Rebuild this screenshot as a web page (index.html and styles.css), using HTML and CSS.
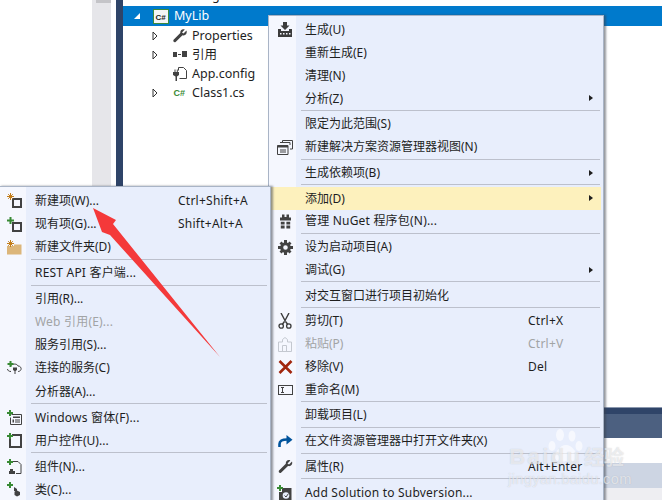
FILE: index.html
```html
<!DOCTYPE html>
<html lang="zh-CN">
<head>
<meta charset="utf-8">
<title>MyLib</title>
<link rel="stylesheet" href="styles.css">
</head>
<body>
<div class="ide">
  <div class="blank"></div>
  <div class="scrollbar"><div class="thumb"></div></div>
  <div class="gap"></div>
  <div class="navy"></div>
  <div class="tree">
    <div class="tree-clip"><div class="tree-row cut"><span class="tree-label indent">Programics</span></div></div>
    <div class="tree-row selected">
      <svg class="exp" width="8" height="8" viewBox="0 0 8 8"><path d="M7 1V7H1Z" fill="#fff"/></svg>
      <svg class="proj" width="16" height="15" viewBox="0 0 16 15"><rect x=".5" y=".5" width="15" height="14" fill="#f5f5f5" stroke="#3c8a3c"/><text x="2.6" y="10.6" class="cs">C#</text></svg>
      <span class="tree-label">MyLib</span>
    </div>
    <div class="tree-row child">
      <svg class="tw" width="6" height="10" viewBox="0 0 6 10"><path d="M1 1L5 5L1 9Z" fill="#fff" stroke="#333"/></svg>
      <svg class="ti" width="16" height="16" viewBox="0 0 16 16"><path d="M14.5 2.5L11.5 5.5L10 4.5L12.8 1.6C10.4.6 8 2 8.3 5L1.6 11.8C.6 13 2.3 15.200 3.600 14L10.500 7.300C13.200 8.200 15.500 5.500 14.500 2.500Z" fill="#424242"/></svg>
      <span class="tree-label">Properties</span>
    </div>
    <div class="tree-row child">
      <svg class="tw" width="6" height="10" viewBox="0 0 6 10"><path d="M1 1L5 5L1 9Z" fill="#fff" stroke="#333"/></svg>
      <svg class="ti" width="16" height="16" viewBox="0 0 16 16"><path d="M1 5h4v5H1zM10 4h5v6h-5zM6 7h3v1H6z" fill="#424242"/></svg>
      <span class="tree-label">引用</span>
    </div>
    <div class="tree-row child">
      <span class="tw"></span>
      <svg class="ti" width="16" height="16" viewBox="0 0 16 16"><path d="M6.500 4.500V1.500H11.500L14.500 4.500V12.500H7.500" fill="none" stroke="#424242"/><path d="M1 6h6v3L5 10.500V15H3.500V10.500L1 9ZM2.500 3.500h1V6h-1zM4.800 3.500h1V6h-1z" fill="#424242"/></svg>
      <span class="tree-label">App.config</span>
    </div>
    <div class="tree-row child">
      <svg class="tw" width="6" height="10" viewBox="0 0 6 10"><path d="M1 1L5 5L1 9Z" fill="#fff" stroke="#333"/></svg>
      <svg class="ti" width="16" height="16" viewBox="0 0 16 16"><text x="1.500" y="11" class="csg">C#</text></svg>
      <span class="tree-label">Class1.cs</span>
    </div>
  </div>
</div>

<div class="bottom-panel">
  <div class="bp-navy"></div>
  <div class="bp-slate"></div>
  <div class="bp-white"></div>
  <div class="bp-blue"></div>
  <div class="bp-gray"></div>
</div>

<div class="menu main-menu">
  <div class="item"><span class="ic"><svg width="16" height="16" viewBox="0 0 16 16"><path d="M6 0h4v3.500h2.500L8 8 3.500 3.500H6z" fill="#3c3c3c"/><path d="M1 7h3v2h8V7h3v8H1z" fill="#3c3c3c"/><path d="M3 11h1.500v1.500H3zM6 11h1.500v1.500H6zM9 11h1.500v1.500H9zM12 11h1.500v1.500H12z" fill="#f5f7fe"/></svg></span><span class="lbl">生成(U)</span></div>
  <div class="item"><span class="ic"></span><span class="lbl">重新生成(E)</span></div>
  <div class="item"><span class="ic"></span><span class="lbl">清理(N)</span></div>
  <div class="item"><span class="ic"></span><span class="lbl">分析(Z)</span><span class="arrow"></span></div>
  <div class="sep"></div>
  <div class="item"><span class="ic"></span><span class="lbl">限定为此范围(S)</span></div>
  <div class="item"><span class="ic"><svg width="16" height="15" viewBox="0 0 16 15"><path d="M5.500 2.500V.5H15.500V9H13M3 2.500H13V5M.5 5.500H11V14.500H.5Z" fill="none" stroke="#424242"/><path d="M.5 5.500H11V7.500H.5zM3 9.500H9V10.500H3zM3 11.500H9V12.500H3z" fill="#424242"/></svg></span><span class="lbl">新建解决方案资源管理器视图(N)</span></div>
  <div class="sep"></div>
  <div class="item"><span class="ic"></span><span class="lbl">生成依赖项(B)</span><span class="arrow"></span></div>
  <div class="sep"></div>
  <div class="item active"><span class="ic"></span><span class="lbl">添加(D)</span><span class="arrow"></span></div>
  <div class="item"><span class="ic"><svg width="11" height="15" viewBox="0 0 11 15"><path d="M2 .5h2.500V3h2V.5H9V3.500H11V6.500H0V3.500H2ZM.8 7.800H4.600V10.500H.8zM6.400 7.800H10.200V10.500H6.400zM.8 11.500H4.600V14.500H.8zM6.400 11.500H10.200V14.500H6.400z" fill="#424242"/></svg></span><span class="lbl"><span class="la">管理 NuGet 程序包(N)...</span></span></div>
  <div class="sep"></div>
  <div class="item"><span class="ic"><svg width="15" height="15" viewBox="0 0 15 15"><circle cx="7.500" cy="7.500" r="3.800" fill="none" stroke="#424242" stroke-width="3"/><path d="M6 0h3v3H6zM6 12h3v3H6zM0 6h3v3H0zM12 6h3v3h-3zM1.500 3.500l2-2 2 2-2 2zM9.500 3.500l2-2 2 2-2 2zM1.500 11.500l2-2 2 2-2 2zM9.500 11.500l2-2 2 2-2 2z" fill="#424242"/></svg></span><span class="lbl">设为启动项目(A)</span></div>
  <div class="item"><span class="ic"></span><span class="lbl">调试(G)</span><span class="arrow"></span></div>
  <div class="sep"></div>
  <div class="item"><span class="ic"></span><span class="lbl">对交互窗口进行项目初始化</span></div>
  <div class="sep"></div>
  <div class="item"><span class="ic"><svg width="14" height="16" viewBox="0 0 14 16"><path d="M3 0L7.500 8.500M11 0L6.500 8.500" stroke="#3c3c3c" stroke-width="1.400" fill="none"/><path d="M7.500 8.500L9.800 11.500M6.500 8.500L4.200 11.500" stroke="#3c3c3c" stroke-width="1.400"/><circle cx="3.200" cy="13" r="2.200" fill="none" stroke="#3c3c3c" stroke-width="1.300"/><circle cx="10.800" cy="13" r="2.200" fill="none" stroke="#3c3c3c" stroke-width="1.300"/></svg></span><span class="lbl">剪切(T)</span><span class="key">Ctrl+X</span></div>
  <div class="item dim"><span class="ic"><svg width="14" height="15" viewBox="0 0 14 15"><path d="M4.500 2.500L7 .5L9.500 2.500V5H13.500V14.500H.5V5H4.500ZM4.500 8.500H8.500V14.500H4.500Z" fill="none" stroke="#c4c8d0"/></svg></span><span class="lbl">粘贴(P)</span><span class="key">Ctrl+V</span></div>
  <div class="item"><span class="ic"><svg width="15" height="14" viewBox="0 0 15 14"><path d="M1.500 1L13.500 13M13.500 1L1.500 13" stroke="#a1260d" stroke-width="2.600"/></svg></span><span class="lbl">移除(V)</span><span class="key">Del</span></div>
  <div class="item"><span class="ic"><svg width="15" height="10" viewBox="0 0 15 10"><rect x=".5" y=".5" width="14" height="9" fill="#f5f7fe" stroke="#424242"/><path d="M3 2.500H6M3 7.500H6M4.500 2.500V7.500" stroke="#424242"/></svg></span><span class="lbl">重命名(M)</span></div>
  <div class="sep"></div>
  <div class="item"><span class="ic"></span><span class="lbl">卸载项目(L)</span></div>
  <div class="sep"></div>
  <div class="item"><span class="ic"><svg width="15" height="13" viewBox="0 0 15 13"><path d="M1.500 12V9C1.500 5.800 4 4.500 9 4.500" fill="none" stroke="#00539c" stroke-width="2.600"/><path d="M8.500 0L14.500 4.800L8.500 9.500Z" fill="#00539c"/></svg></span><span class="lbl">在文件资源管理器中打开文件夹(X)</span></div>
  <div class="sep"></div>
  <div class="item"><span class="ic"><svg width="15" height="15" viewBox="0 0 15 15"><path d="M14 2.500L11 5.500L9.500 4.500L12.300 1.400C10 .4 7.500 2 7.800 4.800L1 11.500C0 12.700 1.800 14.900 3 13.700L10 7C12.700 7.800 15 5.500 14 2.500Z" fill="#424242"/></svg></span><span class="lbl">属性(R)</span><span class="key">Alt+Enter</span></div>
  <div class="sep"></div>
  <div class="item"><span class="ic"><svg width="16" height="16" viewBox="0 0 16 16"><path d="M5 3H14.500V15.500H2V7H5Z" fill="#424242"/><circle cx="9" cy="10.500" r="3.300" fill="#e8eefc"/><path d="M7.500 10.500L9 12L11.500 8.500" stroke="#424242" fill="none"/><path d="M2 0h2v2h2v2H4v2H2V4H0V2h2z" fill="#388a34"/></svg></span><span class="lbl la">Add Solution to Subversion...</span></div>
</div>

<div class="menu sub-menu">
  <div class="item"><span class="ic"><svg width="15" height="15" viewBox="0 0 15 15"><path d="M6 6h8v8H6z" fill="none" stroke="#424242" stroke-width="2"/><path d="M3.500 0v7M0 3.500h7M1.200 1.200l4.600 4.600M5.800 1.200L1.200 5.800" stroke="#c27d1a"/></svg></span><span class="lbl">新建项(W)...</span><span class="key">Ctrl+Shift+A</span></div>
  <div class="item"><span class="ic"><svg width="15" height="15" viewBox="0 0 15 15"><path d="M6 6h8v8H6z" fill="none" stroke="#424242" stroke-width="2"/><path d="M2.500 0h2v2.500H7v2H4.500V7h-2V4.500H0v-2h2.500z" fill="#388a34"/></svg></span><span class="lbl">现有项(G)...</span><span class="key">Shift+Alt+A</span></div>
  <div class="item"><span class="ic"><svg width="15" height="15" viewBox="0 0 15 15"><path d="M0 6H7V4.500H14.500V14.500H0Z" fill="#dcb67a"/><path d="M3.500 0v7M0 3.500h7M1.200 1.200l4.600 4.600M5.800 1.200L1.200 5.800" stroke="#c27d1a"/></svg></span><span class="lbl">新建文件夹(D)</span></div>
  <div class="sep"></div>
  <div class="item"><span class="ic"></span><span class="lbl la">REST API 客户端...</span></div>
  <div class="sep"></div>
  <div class="item"><span class="ic"></span><span class="lbl">引用(R)...</span></div>
  <div class="item dim"><span class="ic"></span><span class="lbl la">Web 引用(E)...</span></div>
  <div class="item"><span class="ic"></span><span class="lbl">服务引用(S)...</span></div>
  <div class="item"><span class="ic"><svg width="15" height="14" viewBox="0 0 15 14"><path d="M4 4.500C6 2.500 10 2.500 11 5C13.500 5 14.500 7 14 8.500C13.500 10 12 10.500 11 10.500M4 10.500C2 10.500.5 9.500.5 8" fill="none" stroke="#424242"/><path d="M6 6.500h4V9L8.500 10v3h-1v-3L6 9z" fill="#424242"/><path d="M2.500 0h2v2h2v2h-2v2h-2V4h-2V2h2z" fill="#388a34"/></svg></span><span class="lbl">连接的服务(C)</span></div>
  <div class="item"><span class="ic"></span><span class="lbl">分析器(A)...</span></div>
  <div class="sep"></div>
  <div class="item"><span class="ic"><svg width="15" height="15" viewBox="0 0 15 15"><path d="M4.500 4.500H14.500V14.500H3.500V7.500" fill="none" stroke="#424242"/><path d="M6 6.500H13V8H6zM8 9.500H13V10.500H8zM8 11.500H13V12.500H8zM5.500 9.500H7V12.500H5.500z" fill="#424242"/><path d="M2 0h2v2h2v2H4v2H2V4H0V2h2z" fill="#388a34"/></svg></span><span class="lbl la">Windows 窗体(F)...</span></div>
  <div class="item"><span class="ic"><svg width="15" height="15" viewBox="0 0 15 15"><path d="M5 2H14V14H3V6" fill="none" stroke="#424242" stroke-width="2"/><path d="M2 0h2v2h2v2H4v2H2V4H0V2h2z" fill="#388a34"/></svg></span><span class="lbl">用户控件(U)...</span></div>
  <div class="sep"></div>
  <div class="item"><span class="ic"><svg width="15" height="15" viewBox="0 0 15 15"><path d="M6 2.500H11L14 5.500V14.500H9" fill="none" stroke="#424242"/><path d="M3 10h3v2h2v3H2v-3h1z" fill="#424242"/><path d="M2 0h2v2h2v2H4v2H2V4H0V2h2z" fill="#388a34"/></svg></span><span class="lbl">组件(N)...</span></div>
  <div class="item"><span class="ic"><svg width="15" height="15" viewBox="0 0 15 15"><path d="M7 5l3 2v3l-3-1zM10 8.500l3 1.500v3l-3 1.500-2.500-1.500V10z" fill="#424242"/><path d="M2 0h2v2h2v2H4v2H2V4H0V2h2z" fill="#388a34"/></svg></span><span class="lbl">类(C)...</span></div>
</div>

<svg class="red-arrow" width="662" height="500" viewBox="0 0 662 500"><path d="M93 208L116 220L113 224L220 357L110 235L102 232Z" fill="#f4393a"/></svg>

<div class="watermark">
  <svg class="paw" width="38" height="36" viewBox="0 0 38 36"><g fill="#fff" fill-opacity=".6"><ellipse cx="5" cy="18" rx="3.500" ry="5"/><ellipse cx="13" cy="7" rx="4" ry="6"/><ellipse cx="25" cy="8" rx="3.500" ry="5.500"/><ellipse cx="32" cy="18" rx="3.500" ry="5"/><path d="M19 17C25 17 31 25 30 30C28 35 23 34 19 33C15 34 10 35 8 30C7 25 13 17 19 17Z"/></g></svg>
  <span class="wm-line1">Baidu</span>
  <span class="wm-cn">经验</span>
  <span class="wm-line2">jingyan.baidu.com</span>
</div>
</body>
</html>
```
FILE: styles.css
```css
* { box-sizing: border-box; }
html, body { margin: 0; padding: 0; }
body {
  width: 662px;
  height: 500px;
  overflow: hidden;
  position: relative;
  background: #fff;
  font-family: "Noto Sans", "Noto Sans CJK SC", sans-serif;
  font-size: 12px;
  color: #1e1e1e;
}
.ide { display: flex; height: 500px; }
.blank { width: 92px; }
.scrollbar { width: 19px; background: #e6e6ea; padding: 0 0 0 4px; }
.thumb { width: 15px; height: 3px; background: #c4c4c8; }
.gap { width: 5px; background: #fff; }
.navy { width: 7px; background: #2f4468; }
.tree { flex: 1; min-width: 0; }
.tree-clip { height: 6px; overflow: hidden; position: relative; }
.tree-row { height: 19px; display: flex; align-items: center; padding-left: 29px; }
.cut { margin-top: -14px; }
.indent { padding-left: 40px; }
.tree-row.selected { height: 20px; background: #007acc; color: #fff; padding-left: 10px; }
.exp { margin-right: 12px; }
.proj { margin-right: 5px; }
.cs { font-family: "Liberation Sans", sans-serif; font-size: 8px; font-weight: 700; fill: #1e1e1e; }
.csg { font-family: "Liberation Sans", sans-serif; font-size: 9px; font-weight: 700; fill: #388a34; }
.tree-label { font-size: 12.500px; line-height: 18px; white-space: nowrap; }
.child .tw { width: 6px; margin-right: 14px; flex: none; }
.child .ti { margin-right: 4px; flex: none; }

.bottom-panel { position: absolute; left: 604px; top: 407px; width: 58px; height: 93px; display: flex; flex-direction: column; }
.bp-navy { height: 7px; background: #2f4468; border-top: 1px solid #8b98ae; }
.bp-slate { height: 24px; background: #4c6080; }
.bp-white { height: 25px; background: #fff; }
.bp-blue { height: 25px; background: #cdd5e3; }
.bp-gray { flex: 1; background: #eeeef2; }

.menu {
  position: absolute;
  background: linear-gradient(to right, #f5f7fe 0, #f5f7fe var(--ic), #e8eefc var(--ic));
  border: 1px solid #a9b4c6;
  box-shadow: 2px 0 2px rgba(60, 65, 75, .55);
}
.main-menu { --ic: 27px; left: 268px; top: 15px; width: 336px; height: 490px; padding: 3px 0 0 0; }
.sub-menu { --ic: 26px; left: -1px; top: 186px; width: 272px; height: 320px; padding: 2.400px 0 0 0; }
.item { height: 22.75px; display: flex; align-items: center; white-space: nowrap; position: relative; }
.sub-menu .item { height: 23.08px; }
.ic { display: flex; align-items: center; justify-content: center; flex: none; }
.main-menu .ic { width: 32px; margin-right: 4px; }
.sub-menu .ic { width: 28px; margin-right: 7px; }
.lbl { line-height: 18px; }
.la { letter-spacing: .2px; }
.key { position: absolute; line-height: 18px; letter-spacing: .25px; }
.main-menu .key { left: 259px; }
.sub-menu .key { left: 178px; }
.dim { color: #a2a4a5; }
.active { background: #fdf1bd; width: 332px; }
.sep { height: 3px; margin: 0 0 0 32px; border-bottom: 1px solid #bcc0cc; padding: 0; width: 299px; position: relative; top: -2px; }
.sub-menu .sep { margin-left: 31px; width: 236px; }
.arrow { position: absolute; right: 10px; top: 8px; width: 0; height: 0; border-left: 4px solid #1e1e1e; border-top: 3.500px solid transparent; border-bottom: 3.500px solid transparent; }
.active .arrow { right: 8px; }

.red-arrow { position: absolute; left: 0; top: 0; pointer-events: none; }

.watermark { position: absolute; left: 505px; top: 428px; width: 150px; height: 70px; color: rgba(255,255,255,.6); font-family: "Liberation Sans", sans-serif; text-shadow: 0 0 1px rgba(110,115,130,.35); }
.paw { position: absolute; left: 42px; top: 0; }
.wm-line1 { position: absolute; left: 4px; top: 16px; font-size: 22px; line-height: 26px; font-weight: 700; letter-spacing: 2.400px; white-space: nowrap; }
.wm-cn { position: absolute; left: 79px; top: 17px; font-size: 20px; line-height: 24px; white-space: nowrap; font-family: "Noto Sans CJK SC", sans-serif; font-weight: 700; }
.wm-line2 { position: absolute; left: 3px; top: 42px; font-size: 14.500px; line-height: 18px; white-space: nowrap; letter-spacing: .4px; }
```
